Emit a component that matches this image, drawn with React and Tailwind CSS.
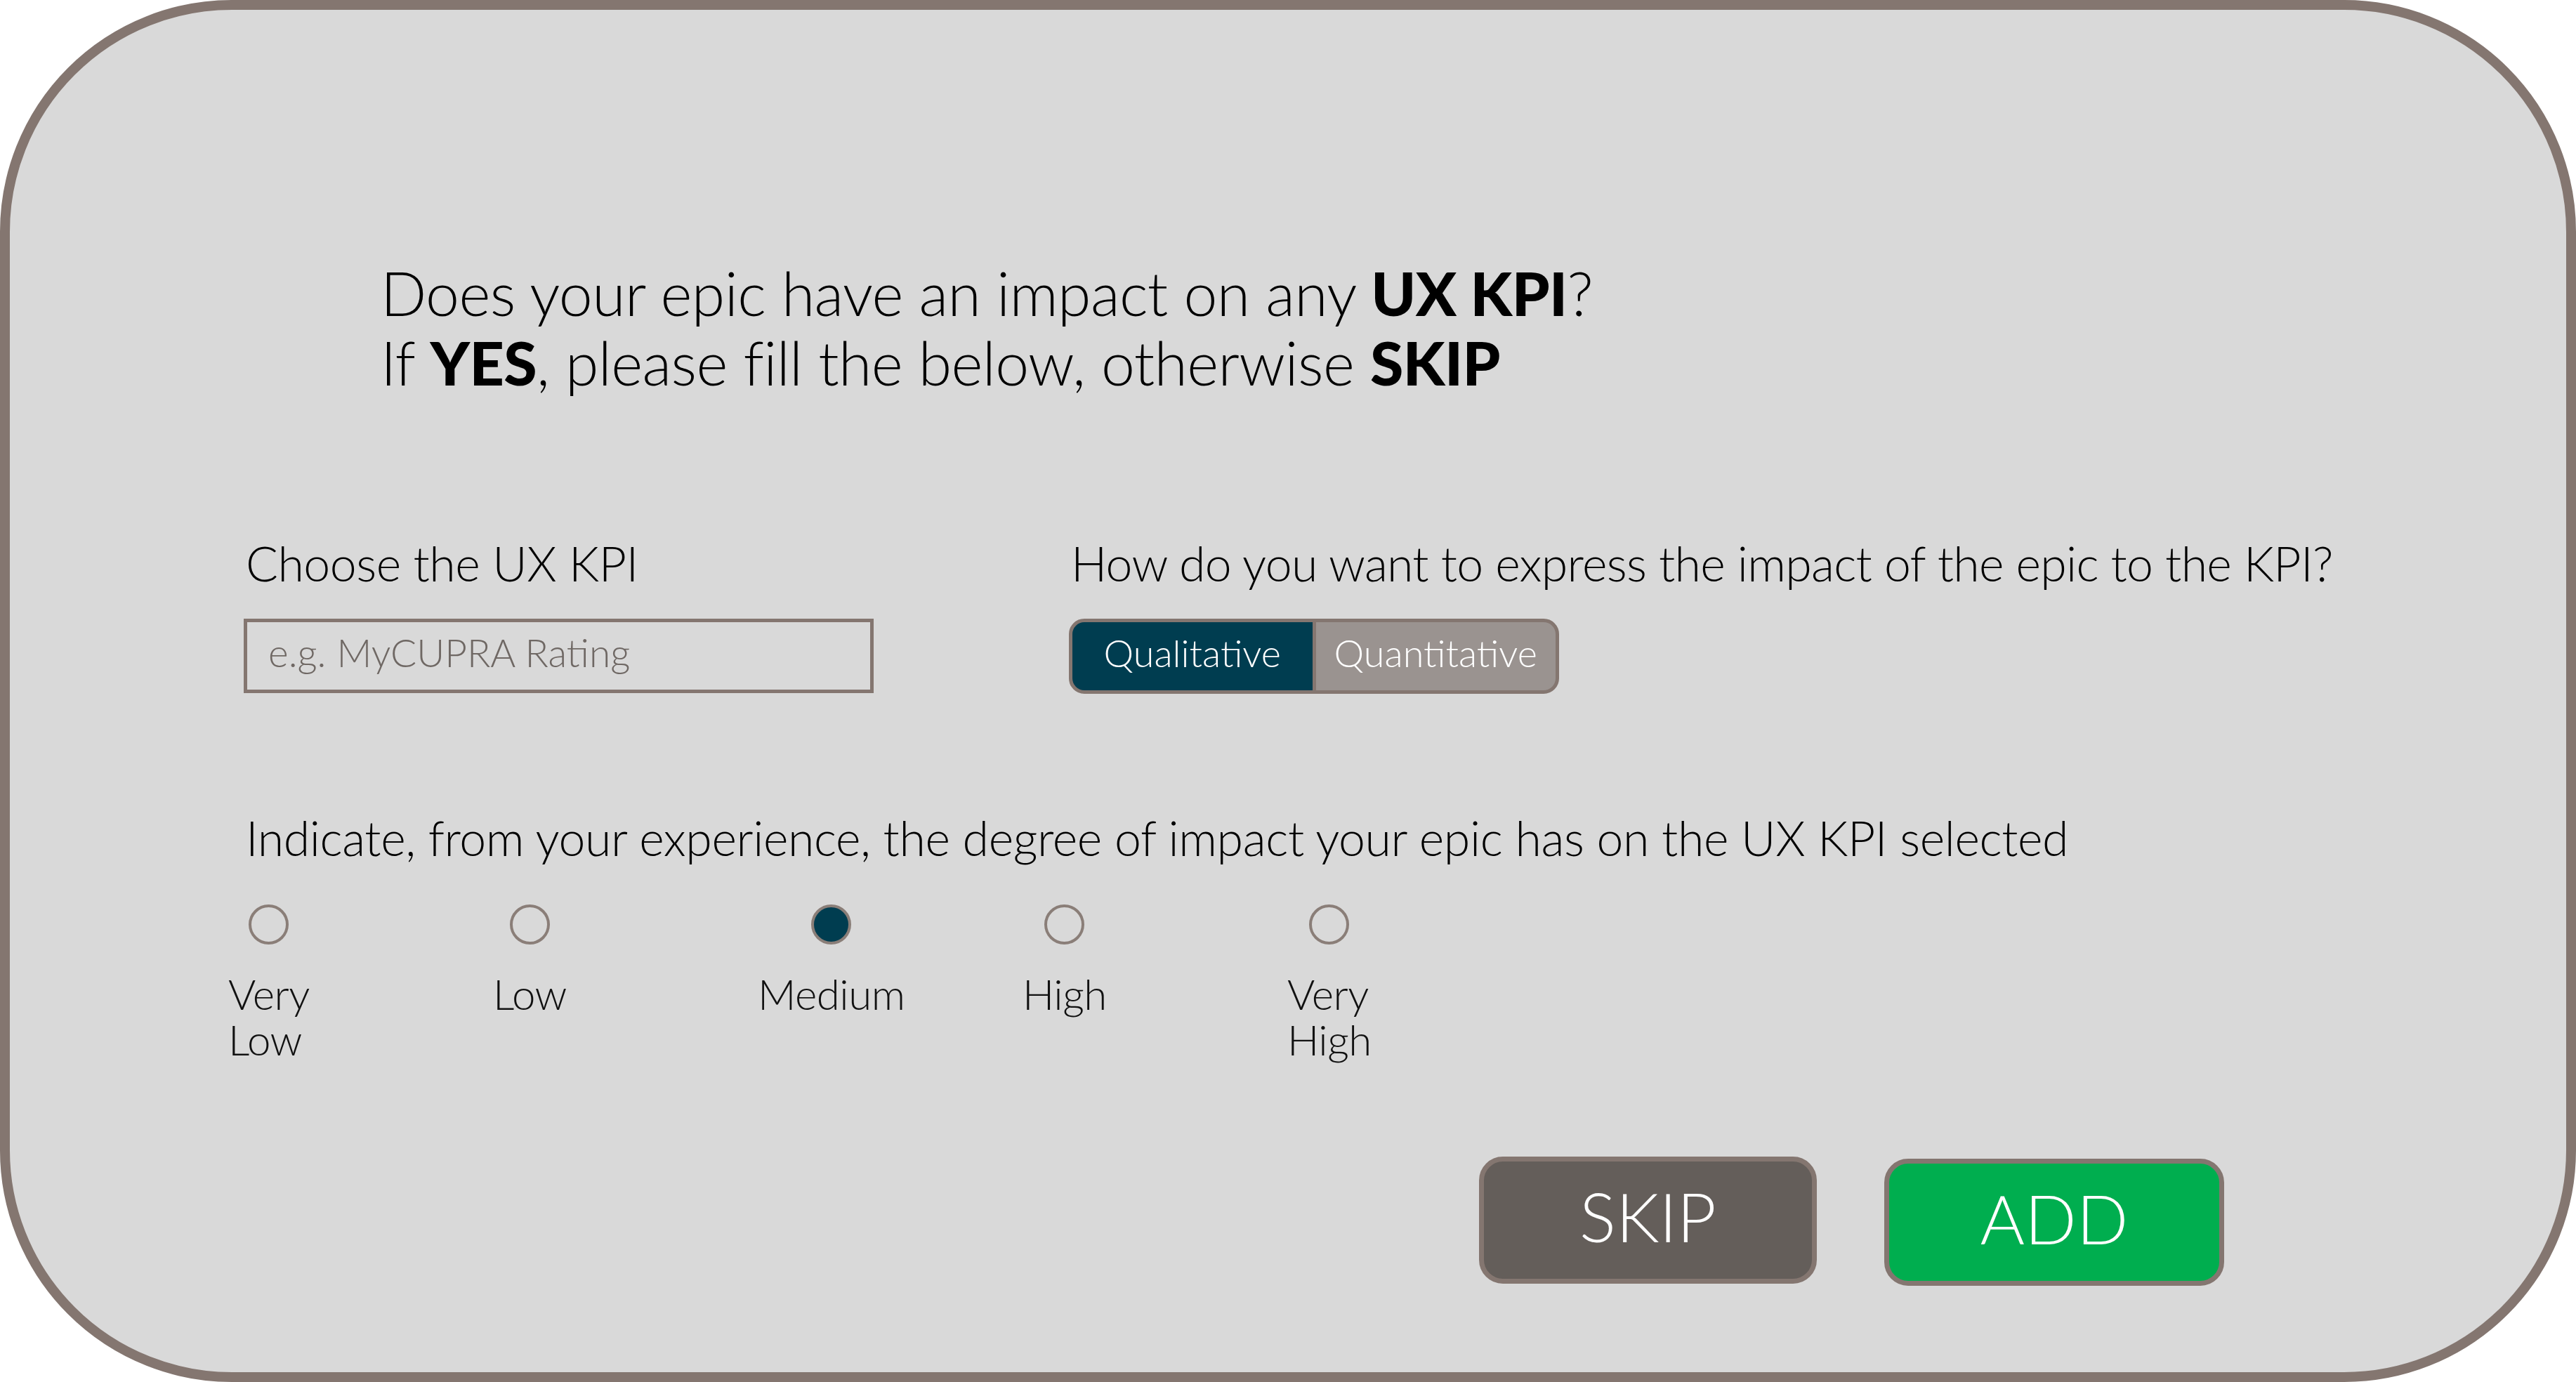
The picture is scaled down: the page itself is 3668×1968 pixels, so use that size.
import { useState } from "react";

const LEVELS = [
  { id: "very-low", label: "Very Low" },
  { id: "low", label: "Low" },
  { id: "medium", label: "Medium" },
  { id: "high", label: "High" },
  { id: "very-high", label: "Very High" },
];

function Radio({ checked, label, onClick }) {
  return (
    <button type="button" onClick={onClick} className="flex flex-col items-center justify-self-start">
      <span
        className={[
          "h-[57px] w-[57px] rounded-full border-[4px] border-[#8a7e78]",
          checked ? "bg-[#003d50]" : "bg-transparent",
        ].join(" ")}
      />
      <span className="mt-[38px] w-min text-left text-[60px] leading-[65px] font-light tracking-[-0.5px] text-[#111]">
        {label}
      </span>
    </button>
  );
}

export default function App() {
  const [mode, setMode] = useState("qualitative");
  const [level, setLevel] = useState("medium");

  return (
    <div className="h-[1968px] w-[3668px] bg-white font-['Lato','Liberation_Sans',sans-serif]">
      <div className="flex h-full w-full flex-col rounded-[330px] border-[14px] border-[#847670] bg-[#d9d9d9] pl-[336px] pt-[353px]">
        <h1 className="ml-[192px] text-[86px] leading-[99px] font-light tracking-[-0.6px] text-black">
          Does your epic have an impact on any <b className="font-black">UX KPI</b>?
          <br />
          If <b className="font-black">YES</b>, please fill the below, otherwise <b className="font-black">SKIP</b>
        </h1>

        <div className="mt-[197px] grid grid-cols-[1175px_auto]">
          <div className="flex flex-col">
            <label className="text-[68px] leading-[80px] font-light tracking-[-0.5px] text-black">Choose the UX KPI</label>
            <input
              placeholder="e.g. MyCUPRA Rating"
              className="mt-[39px] -ml-[3px] h-[106px] w-[897px] border-[5px] border-[#847670] bg-transparent px-[30px] pb-[10px] text-[55px] font-light text-black outline-none placeholder:text-[#6f6864]"
            />
          </div>
          <div className="flex flex-col">
            <div className="text-[68px] leading-[80px] font-light tracking-[-0.7px] text-black">
              How do you want to express the impact of the epic to the KPI?
            </div>
            <div className="mt-[39px] -ml-[3px] flex h-[107px] w-[698px] overflow-hidden rounded-[22px] border-[5px] border-[#847670] bg-[#847670]">
              <button
                type="button"
                onClick={() => setMode("qualitative")}
                className={[
                  "flex-1 pb-[10px] text-[54px] font-light text-white",
                  mode === "qualitative" ? "bg-[#003d50]" : "bg-[#9a9390]",
                ].join(" ")}
              >
                Qualitative
              </button>
              <div className="w-[5px]" />
              <button
                type="button"
                onClick={() => setMode("quantitative")}
                className={[
                  "flex-1 pb-[10px] text-[54px] font-light text-white",
                  mode === "quantitative" ? "bg-[#003d50]" : "bg-[#9a9390]",
                ].join(" ")}
              >
                Quantitative
              </button>
            </div>
          </div>
        </div>

        <div className="mt-[165px] text-[68px] leading-[80px] font-light tracking-[-0.4px] text-black">
          Indicate, from your experience, the degree of impact your epic has on the UX KPI selected
        </div>

        <div className="-ml-[25px] mt-[55px] grid grid-cols-[repeat(5,377px)]">
          {LEVELS.map((l) => (
            <Radio key={l.id} label={l.label} checked={level === l.id} onClick={() => setLevel(l.id)} />
          ))}
        </div>

        <div className="mt-[134px] flex justify-end gap-[96px] pr-[487px]">
          <button
            type="button"
            className="h-[181px] w-[481px] rounded-[34px] border-[7px] border-[#847670] bg-[#645e5a] pb-[12px] text-[97px] font-light text-white"
          >
            SKIP
          </button>
          <button
            type="button"
            className="mt-[3px] h-[181px] w-[484px] rounded-[34px] border-[7px] border-[#847670] bg-[#00ae4f] pb-[12px] text-[97px] font-light text-white"
          >
            ADD
          </button>
        </div>
      </div>
    </div>
  );
}
